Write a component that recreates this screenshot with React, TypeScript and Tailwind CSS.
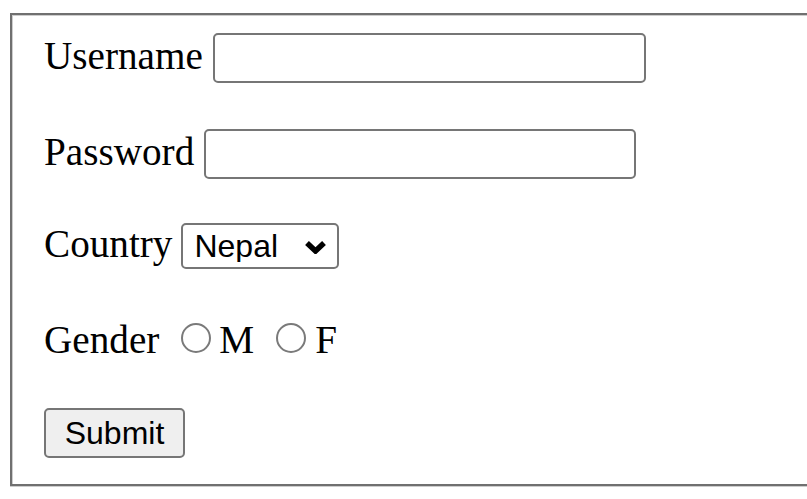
import React, { useState } from 'react';

const serif = "font-['Liberation_Serif','Times_New_Roman',serif] text-[39.2px] leading-[44px] text-black";
const sans = "font-['Liberation_Sans',Arial,sans-serif] text-[32px] text-black";

const App: React.FC = () => {
  const [username, setUsername] = useState('');
  const [password, setPassword] = useState('');
  const [country, setCountry] = useState('Nepal');
  const [gender, setGender] = useState('');

  return (
    <div className="w-[807px] h-[499px] overflow-hidden bg-white pl-[10px] pt-[13px]">
      <form
        onSubmit={(e) => e.preventDefault()}
        className="w-[830px] h-[473px] border-2 border-[#707070] shadow-[inset_1px_1px_0_#cdcdcd,0_1px_0_#cdcdcd] pl-[32px] pt-[18px] flex flex-col"
      >
        {/* username */}
        <div className="flex items-center h-[50px]">
          <label className={`${serif} mb-[4px]`}>Username</label>
          <input
            type="text"
            value={username}
            onChange={(e) => setUsername(e.target.value)}
            className="ml-[10px] w-[433px] h-[50px] border-2 border-[#767676] rounded-[5px] bg-white outline-none px-2 text-[32px]"
          />
        </div>

        {/* password */}
        <div className="flex items-center h-[50px] mt-[46px]">
          <label className={`${serif} mb-[4px]`}>Password</label>
          <input
            type="password"
            value={password}
            onChange={(e) => setPassword(e.target.value)}
            className="ml-[10px] w-[432px] h-[50px] border-2 border-[#767676] rounded-[5px] bg-white outline-none px-2 text-[32px]"
          />
        </div>

        {/* country */}
        <div className="flex items-center h-[46px] mt-[44px]">
          <label className={`${serif} mb-[4px]`}>Country</label>
          <div className="relative ml-[9px] w-[158px] h-[46px]">
            <select
              value={country}
              onChange={(e) => setCountry(e.target.value)}
              className={`${sans} appearance-none w-full h-full border-2 border-[#767676] rounded-[5px] bg-white pl-[11px] leading-none outline-none`}
            >
              <option>Nepal</option>
              <option>India</option>
              <option>China</option>
            </select>
            <svg
              className="absolute right-[12px] top-[17px] pointer-events-none"
              width="23"
              height="14"
              viewBox="0 0 23 14"
            >
              <path d="M3 3 L11.5 11 L20 3" fill="none" stroke="#000" strokeWidth="5.5" />
            </svg>
          </div>
        </div>

        {/* gender */}
        <div className="flex items-center h-[46px] mt-[50px]">
          <span className={`${serif} mb-[4px]`}>Gender</span>
          <input
            type="radio"
            name="gender"
            checked={gender === 'M'}
            onChange={() => setGender('M')}
            className="appearance-none shrink-0 ml-[22px] mb-[9px] w-[30px] h-[30px] rounded-full border-2 border-[#7a7a7a] bg-white checked:bg-[#0075ff]"
          />
          <span className={`${serif} mb-[4px] ml-[8px]`}>M</span>
          <input
            type="radio"
            name="gender"
            checked={gender === 'F'}
            onChange={() => setGender('F')}
            className="appearance-none shrink-0 ml-[22px] mb-[9px] w-[30px] h-[30px] rounded-full border-2 border-[#7a7a7a] bg-white checked:bg-[#0075ff]"
          />
          <span className={`${serif} mb-[4px] ml-[9px]`}>F</span>
        </div>

        {/* submit */}
        <div className="flex items-center h-[50px] mt-[43px]">
          <button
            type="submit"
            className={`${sans} w-[141px] h-[50px] border-2 border-[#767676] rounded-[5px] bg-[#efefef] leading-none`}
          >
            Submit
          </button>
        </div>
      </form>
    </div>
  );
};

export default App;
